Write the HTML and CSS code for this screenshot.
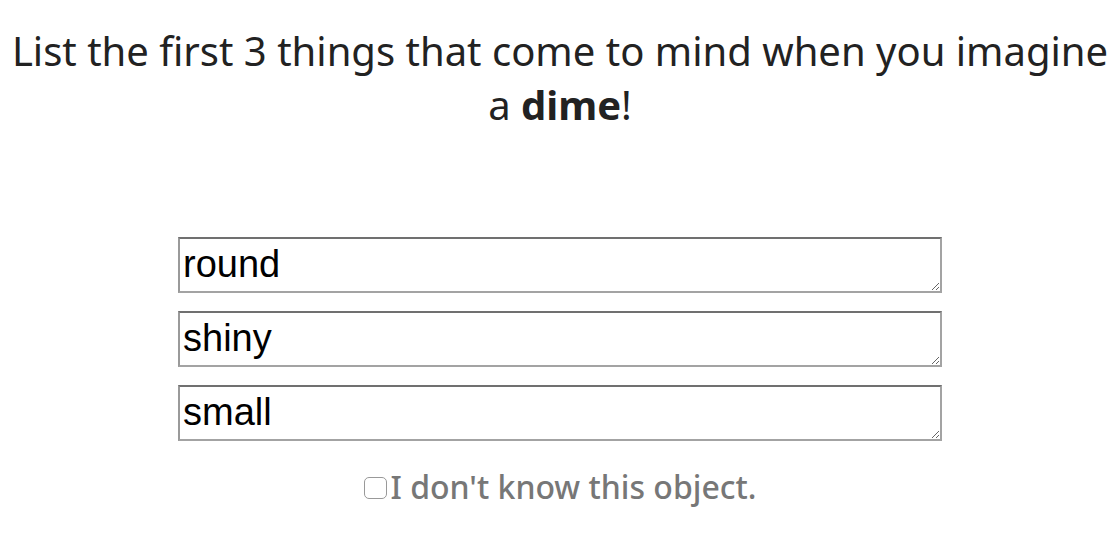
FILE: index.html
```html
<!DOCTYPE html>
<html>
<head>
<meta charset="utf-8">
<link rel="stylesheet" href="styles.css">
</head>
<body>
<main class="page">
  <h1 class="prompt">List the first 3 things that come to mind when you imagine a <b>dime</b>!</h1>
  <div class="answers">
    <textarea class="answer" rows="1">round</textarea>
    <textarea class="answer" rows="1">shiny</textarea>
    <textarea class="answer" rows="1">small</textarea>
  </div>
  <label class="unknown"><input type="checkbox" class="unknown-box">I don't know this object.</label>
</main>
</body>
</html>
```

FILE: styles.css
```css
html, body {
  margin: 0;
  background: #fff;
}
.page {
  font-family: "Noto Sans", sans-serif;
  text-align: center;
  display: flex;
  flex-direction: column;
  align-items: center;
}
.prompt {
  margin: 24px 0 0;
  padding: 0 8px;
  font-size: 40px;
  font-weight: normal;
  line-height: 54px;
  color: #222;
}
.prompt b {
  font-weight: bold;
}
.answers {
  margin-top: 105px;
  display: flex;
  flex-direction: column;
  gap: 18px;
}
.answer {
  box-sizing: border-box;
  width: 764px;
  height: 56px;
  margin: 0;
  padding: 1px 3px 0;
  font-family: "Liberation Sans", Arial, sans-serif;
  font-size: 38px;
  line-height: 48px;
  color: #000;
  border: 2px solid;
  border-color: #707070 #a3a3a3 #a3a3a3 #9a9a9a;
  border-radius: 0;
  resize: vertical;
  overflow: hidden;
}
.unknown {
  margin-top: 24px;
  display: flex;
  align-items: center;
  gap: 4px;
  font-size: 32px;
  font-weight: 500;
  color: #777;
}
.unknown-box {
  appearance: none;
  -webkit-appearance: none;
  box-sizing: border-box;
  width: 23px;
  height: 22px;
  margin: 2px 0 0;
  border: 1px solid #999;
  border-radius: 5px;
  background: #fff;
}
```
